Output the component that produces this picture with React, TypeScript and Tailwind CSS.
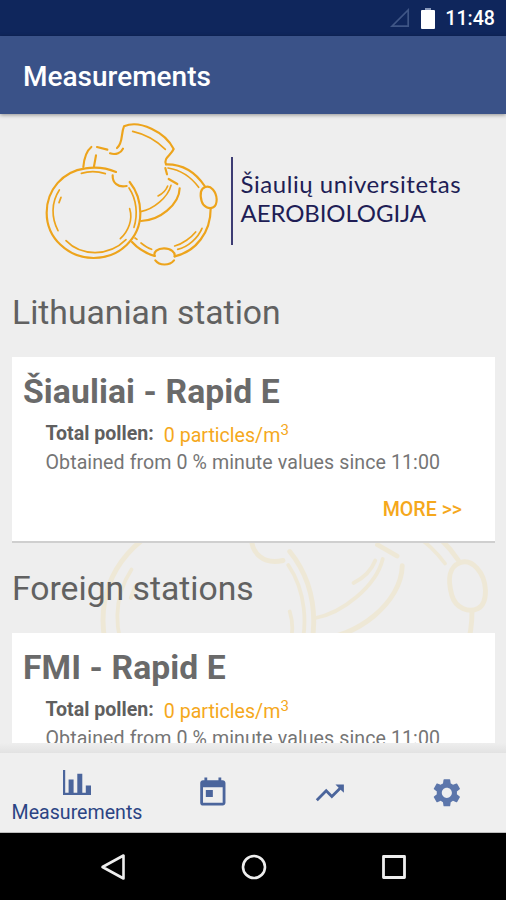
import { MdSettings, MdToday, MdTrendingUp } from 'react-icons/md';

type Station = { id: string; name: string; value: string; note: string };

const LITHUANIAN: Station[] = [
  { id: 'siauliai', name: 'Šiauliai - Rapid E', value: '0 particles/m', note: 'Obtained from 0 % minute values since 11:00' },
];

const FOREIGN: Station[] = [
  { id: 'fmi', name: 'FMI - Rapid E', value: '0 particles/m', note: 'Obtained from 0 % minute values since 11:00' },
];

// Pollen grains, used for the logo and the page watermark
function PollenArt({ className }: { className: string }) {
  return (
    <svg viewBox="0 0 600 480" fill="none" stroke="currentColor" strokeWidth="6.5" strokeLinecap="round" strokeLinejoin="round" className={className}>
      {/* left grain */}
      <path d="M240 180C212 168 180 164 148 169C80 178 32 234 32 302C32 378 96 438 173 438C250 438 313 378 313 304C313 268 302 236 281 210" />
      <path d="M136 184C160 177 186 178 208 185" strokeWidth="5" />
      <path d="M230 190C229 212 246 228 272 222" />
      <path d="M70 234C45 272 46 318 66 356M75 256L69 272" strokeWidth="5" />
      <path d="M90 386C135 433 218 435 270 383M281 290C291 322 278 356 253 380M279 228C302 262 306 308 294 346" strokeWidth="5" />
      {/* top grain */}
      <path d="M142 165C144 142 150 118 166 105M174 163L180 130M183 105L214 113" />
      <path d="M222 124C240 130 256 122 261 110M243 108C262 92 254 66 264 43C310 22 388 60 413 111C405 130 382 137 390 157" />
      <path d="M290 58C326 66 362 86 388 112" strokeWidth="5" />
      <path d="M388 168L393 187M398 201L424 216" />
      <path d="M314 299C352 292 396 256 405 220M366 252C382 244 390 235 395 222" strokeWidth="5" />
      <path d="M431 229C430 278 370 326 315 327" />
      {/* right grain */}
      <path d="M390 157C438 156 478 180 506 222M524 290C524 360 480 419 416 433M288 390C306 410 330 424 356 432" />
      <path d="M396 168C434 174 466 196 488 226M297 378L303 382M315 393C325 401 335 408 347 412M416 402C440 396 466 376 479 360M425 412C456 405 486 378 498 349" strokeWidth="5" />
      <path d="M508 225C524 219 541 238 542 262C542 276 538 283 532 286C520 292 502 286 497 268C491 246 494 230 508 225Z" />
      <path d="M356 432C352 420 364 409 384 409C405 409 418 421 416 433M358 445C370 461 400 462 414 445" />
    </svg>
  );
}

function IconSignal() {
  return (
    <svg viewBox="0 0 20 20" fill="none" stroke="#3f5686" strokeWidth="1.7" className="h-5 w-5">
      <path d="M18.2 2V18.2H2Z" />
    </svg>
  );
}

function IconBattery() {
  return (
    <svg viewBox="0 0 14 21" className="h-[21px] w-3.5">
      <path d="M4 0h6v2H4z" fill="#8a9abb" />
      <rect y="2" width="14" height="19" rx="1" fill="#fff" />
    </svg>
  );
}

function IconBars() {
  return (
    <svg viewBox="0 0 28 25" fill="currentColor" className="h-[25px] w-7">
      <path d="M0 0h2.2v22.8H28V25H0zM5.6 9.4h5v14h-5zM14.3 3.7h5v19.7h-5zM22.8 15.5H28v7.9h-5.2z" />
    </svg>
  );
}

function StationCard({ station }: { station: Station }) {
  return (
    <div className="h-[186px] shrink-0 border-b-2 border-[#cfcfcf] bg-white pt-[15px] pl-[11px] text-[#5f5f5f]">
      <h3 className="text-[33.7px] leading-[40px] font-bold tracking-[0.1px] text-[#6a6a6a]">{station.name}</h3>
      <div className="flex items-start pl-[22.5px] text-[19.6px] leading-6">
        <span className="mt-2.5 font-bold">Total pollen:</span>
        <span className="mt-3 ml-2.5 text-[#f5a81c]">
          {station.value}
          <span className="relative -top-[7px] text-[15px] leading-none">3</span>
        </span>
      </div>
      <p className="mt-[3px] pl-[22.5px] text-[19.6px] leading-6 tracking-[0.08px] text-[#757575]">{station.note}</p>
      <button type="button" className="mt-[23px] mr-[33px] ml-auto block text-[19.6px] leading-6 font-medium text-[#f5a81c]">
        MORE &gt;&gt;
      </button>
    </div>
  );
}

export default function App() {
  return (
    <div className="flex h-[900px] w-[506px] flex-col overflow-hidden bg-[#eeeeee] font-['Roboto',sans-serif]">
      {/* Status bar */}
      <div className="flex h-9 shrink-0 items-center justify-end bg-[#0f265c] pr-[11px] text-white">
        <IconSignal />
        <span className="ml-[11px]"><IconBattery /></span>
        <span className="mt-0.5 ml-[10px] text-[19.6px] font-medium">11:48</span>
      </div>

      {/* App bar */}
      <header className="z-10 flex h-[78px] shrink-0 items-center bg-[#3a5288] pt-1 pl-[23px] shadow-[0_1px_4px_rgba(0,0,0,0.4)]">
        <h1 className="text-[28px] font-medium text-white">Measurements</h1>
      </header>

      <main className="relative h-[629px] shrink-0 overflow-hidden">
        <PollenArt className="absolute top-[280px] left-[79px] h-[360px] w-[450px] text-[#f2c84a] opacity-[0.14]" />
        <div className="relative flex flex-col pr-[11px] pl-3">
          {/* Logo */}
          <div className="-mt-0.5 flex h-40 pl-6">
            <PollenArt className="h-40 w-[200px] shrink-0 text-[#eda41c]" />
            <div className="mt-[45px] -ml-[5px] h-[88px] w-[1.5px] shrink-0 bg-[#3d3c73]" />
            <div className="mt-[57px] ml-2 font-['Lato',sans-serif] whitespace-nowrap text-[#201d55]">
              <p className="text-[24px] leading-[29px] tracking-[0.55px]">Šiaulių universitetas</p>
              <p className="text-[24px] leading-[29px] tracking-[-0.1px]">AEROBIOLOGIJA</p>
            </div>
          </div>

          <h2 className="mt-[21px] text-[33.7px] leading-[40px] text-[#616161]">Lithuanian station</h2>
          <div className="mt-6 flex flex-col">
            {LITHUANIAN.map(s => <StationCard key={s.id} station={s} />)}
          </div>

          <h2 className="mt-[26px] text-[33.7px] leading-[40px] text-[#616161]">Foreign stations</h2>
          <div className="mt-6 flex flex-col">
            {FOREIGN.map(s => <StationCard key={s.id} station={s} />)}
          </div>
        </div>
      </main>

      {/* Tabs */}
      <div className="h-[10px] shrink-0 bg-linear-to-b from-[#eeeeee] to-[#e2e2e2]" />
      <nav className="flex h-20 shrink-0 border-b border-[#bdbdbd] bg-[#efefef] text-[#4b659c]">
        <button type="button" className="flex w-[154px] flex-col items-center pt-[17px]">
          <IconBars />
          <span className="mt-1.5 text-[19.6px] leading-6 text-[#2b4484]">Measurements</span>
        </button>
        <button type="button" className="flex w-[117px] justify-center pt-[23px]"><MdToday className="size-[33.7px]" /></button>
        <button type="button" className="flex w-[117px] justify-center pt-[23px]"><MdTrendingUp className="size-[33.7px]" /></button>
        <button type="button" className="flex w-[118px] justify-center pt-[23px]"><MdSettings className="size-[33.7px] text-[#5c76ab]" /></button>
      </nav>

      {/* System navigation */}
      <div className="flex h-[67px] shrink-0 items-center justify-between bg-black pr-[97px] pl-[98px]">
        <svg viewBox="0 0 30 30" fill="none" stroke="#eee" strokeWidth="2.6" strokeLinejoin="round" className="size-[30px]">
          <path d="M25.5 3.5v23L4.5 15z" />
        </svg>
        <svg viewBox="0 0 30 30" fill="none" stroke="#eee" strokeWidth="2.6" className="size-[30px]">
          <circle cx="15" cy="15" r="11" />
        </svg>
        <svg viewBox="0 0 30 30" fill="none" stroke="#eee" strokeWidth="2.8" strokeLinejoin="round" className="size-[30px]">
          <path d="M4.5 4.5h21v21h-21z" />
        </svg>
      </div>
    </div>
  );
}
